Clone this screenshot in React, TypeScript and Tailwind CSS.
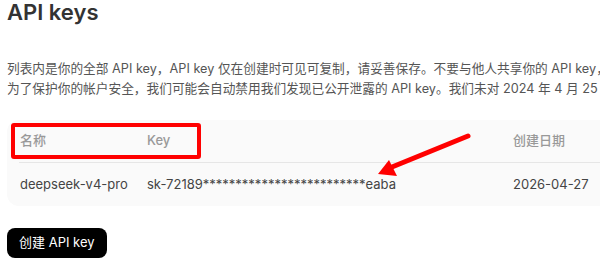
import React from "react";

const font = { fontFamily: 'Inter, "Noto Sans CJK SC", sans-serif' };

export default function App() {
  return (
    <div className="relative w-[600px] h-[266px] overflow-hidden bg-white" style={font}>
      <div className="pl-[7px]">
        <h1 className="text-[22px] leading-[24px] font-semibold text-[#333]">API keys</h1>
        <div className="mt-[35px] text-[12.7px] leading-[20px] text-[#555] whitespace-nowrap">
          <p>列表内是你的全部 API key，API key 仅在创建时可见可复制，请妥善保存。不要与他人共享你的 API key，</p>
          <p>为了保护你的帐户安全，我们可能会自动禁用我们发现已公开泄露的 API key。我们未对 2024 年 4 月 25 日</p>
        </div>
        <div className="mt-[21px] w-[680px] rounded-xl bg-[#fafafa] px-[12px] text-[13px]">
          <div className="flex h-[42px] items-center text-[#999] font-medium">
            <div className="w-[128px] pl-[1px]">名称</div>
            <div className="w-[366px]">Key</div>
            <div>创建日期</div>
          </div>
          <div className="h-px bg-[#e6e6e6]" />
          <div className="flex h-[43px] items-center text-[#444]">
            <div className="w-[128px] pl-[1px]">deepseek-v4-pro</div>
            <div className="w-[366px]">sk-72189*************************eaba</div>
            <div>2026-04-27</div>
          </div>
        </div>
        <button className="mt-[22px] h-[30px] rounded-lg bg-black px-[12px] text-[13px] text-white">
          创建 API key
        </button>
      </div>
      <div className="absolute left-[11px] top-[123px] w-[190px] h-[36px] border-[4px] border-[#ff0000] rounded-[3px]" />
      <svg className="absolute left-0 top-0" width="600" height="266" viewBox="0 0 600 266">
        <line x1="468" y1="136" x2="392" y2="167" stroke="#ff0000" strokeWidth="5" strokeLinecap="round" />
        <polygon points="378,174 389,160 397,176" fill="#ff0000" />
      </svg>
    </div>
  );
}
